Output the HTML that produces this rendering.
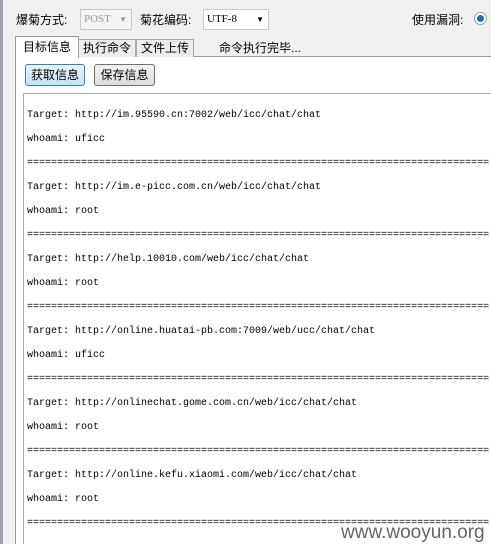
<!DOCTYPE html><html><head><meta charset="utf-8"><style>
body{margin:0;width:491px;height:544px;background:#f0f0f0;position:relative;overflow:hidden;font-family:"Liberation Sans","Noto Sans CJK SC",sans-serif;font-size:12px;color:#000}
.a{position:absolute}
.ln{position:absolute;left:27px;font-family:"Liberation Mono","Noto Sans CJK SC",monospace;font-size:10px;white-space:nowrap}
.btn{position:absolute;top:64px;height:20px;border:1px solid #707070;border-radius:3px;background:linear-gradient(#f2f2f2,#dcdcdc);font-size:12px;line-height:20px;text-align:center}
</style></head><body>
<div class="a" style="left:0;top:0;width:3px;height:544px;background:#9aa3ad"></div>
<div class="a" style="left:16px;top:11px">爆菊方式:</div>
<div class="a" style="left:80px;top:9px;width:50px;height:19px;border:1px solid #c8c8c8;background:#f4f4f4;color:#999;font-family:'Liberation Serif',serif;font-size:11px;line-height:19px;text-indent:3px">POST<span style="position:absolute;right:4px;top:0;font-size:8px">▼</span></div>
<div class="a" style="left:140px;top:11px">菊花编码:</div>
<div class="a" style="left:203px;top:9px;width:64px;height:19px;border:1px solid #c8c8c8;background:#fff;font-family:'Liberation Serif',serif;font-size:11px;line-height:19px;text-indent:3px">UTF-8<span style="position:absolute;right:4px;top:0;font-size:8px">▼</span></div>
<div class="a" style="left:412px;top:11px">使用漏洞:</div>
<div class="a" style="left:474px;top:12px;width:11px;height:11px;border-radius:50%;border:1px solid #8aa;background:#fff"><div style="margin:2px;width:7px;height:7px;border-radius:50%;background:#1e6fb0"></div></div>
<div class="a" style="left:15px;top:56px;width:476px;height:488px;background:#fff;border-left:1px solid #999;border-top:1px solid #999;box-sizing:border-box"></div>
<div class="a" style="left:15px;top:36px;width:62px;height:21px;background:#fff;border:1px solid #999;border-bottom:none;line-height:20px;text-align:center">目标信息</div>
<div class="a" style="left:78px;top:39px;width:56px;height:17px;background:#ececec;border:1px solid #aaa;border-bottom:none;line-height:17px;text-align:center">执行命令</div>
<div class="a" style="left:136px;top:39px;width:56px;height:17px;background:#ececec;border:1px solid #aaa;border-bottom:none;line-height:17px;text-align:center">文件上传</div>
<div class="a" style="left:219px;top:39px">命令执行完毕...</div>
<div class="btn" style="left:25px;width:58px;border-color:#3c7fb1;background:linear-gradient(#e5f4fc,#c4e5f6)">获取信息</div>
<div class="btn" style="left:94px;width:59px">保存信息</div>
<div class="a" style="left:23px;top:93px;width:468px;height:451px;border-left:1px solid #aaa;border-top:1px solid #aaa;background:#fff;box-sizing:border-box;overflow:hidden">
<div style="position:relative;left:-24px;top:-94px">
<div class="ln" style="top:110px">Target: http://im.95590.cn:7002/web/icc/chat/chat</div>
<div class="ln" style="top:134px">whoami: uficc</div>
<div class="ln" style="top:158px">=============================================================================</div>
<div class="ln" style="top:182px">Target: http://im.e-picc.com.cn/web/icc/chat/chat</div>
<div class="ln" style="top:206px">whoami: root</div>
<div class="ln" style="top:230px">=============================================================================</div>
<div class="ln" style="top:254px">Target: http://help.10010.com/web/icc/chat/chat</div>
<div class="ln" style="top:278px">whoami: root</div>
<div class="ln" style="top:302px">=============================================================================</div>
<div class="ln" style="top:326px">Target: http://online.huatai-pb.com:7009/web/ucc/chat/chat</div>
<div class="ln" style="top:350px">whoami: uficc</div>
<div class="ln" style="top:374px">=============================================================================</div>
<div class="ln" style="top:398px">Target: http://onlinechat.gome.com.cn/web/icc/chat/chat</div>
<div class="ln" style="top:422px">whoami: root</div>
<div class="ln" style="top:446px">=============================================================================</div>
<div class="ln" style="top:470px">Target: http://online.kefu.xiaomi.com/web/icc/chat/chat</div>
<div class="ln" style="top:494px">whoami: root</div>
<div class="ln" style="top:518px">=============================================================================</div>
</div></div>
<div class="a" style="left:341px;top:522px;font-size:19px;color:#666;font-family:'Liberation Sans',sans-serif">www.wooyun.org</div>
</body></html>
